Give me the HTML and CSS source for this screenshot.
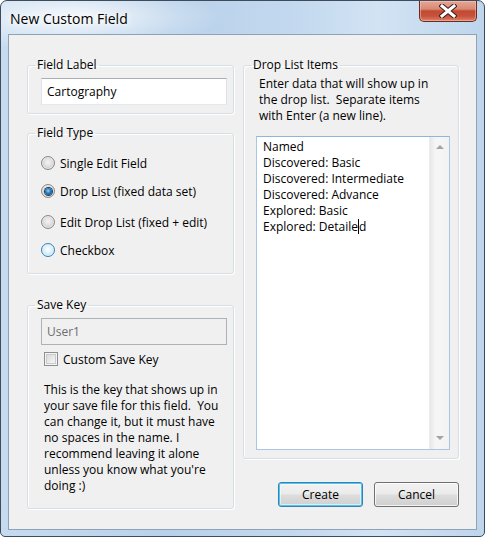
FILE: index.html
```html
<!DOCTYPE html>
<html>
<head>
<meta charset="utf-8">
<link rel="stylesheet" href="styles.css">
</head>
<body>
<div class="window">
  <div class="titlebar">
    <span class="title">New Custom Field</span>
    <div class="close">
      <svg width="18" height="14" viewBox="0 0 18 14">
        <path d="M3 2 L15 12 M15 2 L3 12" stroke="#3b1c14" stroke-width="5" stroke-linecap="square" fill="none"/>
        <path d="M3 2 L15 12 M15 2 L3 12" stroke="#ffffff" stroke-width="3" stroke-linecap="square" fill="none"/>
      </svg>
    </div>
  </div>
  <div class="client">
    <div class="col-left">
      <fieldset class="group">
        <legend>Field Label</legend>
        <div class="g-body g-label">
          <div class="textbox">Cartography</div>
        </div>
      </fieldset>
      <fieldset class="group g-type-box">
        <legend>Field Type</legend>
        <div class="g-body g-type">
          <div class="radio-row"><span class="radio"></span><span>Single Edit Field</span></div>
          <div class="radio-row r2"><span class="radio checked"></span><span>Drop List (fixed data set)</span></div>
          <div class="radio-row r3"><span class="radio"></span><span>Edit Drop List (fixed + edit)</span></div>
          <div class="radio-row r4"><span class="radio hover"></span><span>Checkbox</span></div>
        </div>
      </fieldset>
      <fieldset class="group g-save-box">
        <legend>Save Key</legend>
        <div class="g-body g-save">
          <div class="textbox disabled">User1</div>
          <div class="check-row"><span class="checkbox"></span><span>Custom Save Key</span></div>
          <p class="note">This is the key that shows up in<br>your save file for this field.&nbsp; You<br>can change it, but it must have<br>no spaces in the name. I<br>recommend leaving it alone<br>unless you know what you're<br>doing :)</p>
        </div>
      </fieldset>
    </div>
    <div class="col-right">
      <fieldset class="group">
        <legend>Drop List Items</legend>
        <div class="g-body g-items">
          <p class="desc">Enter data that will show up in<br>the drop list.&nbsp; Separate items<br>with Enter (a new line).</p>
          <div class="listbox">
            <div class="list-text">
              <div>Named</div>
              <div>Discovered: Basic</div>
              <div>Discovered: Intermediate</div>
              <div>Discovered: Advance</div>
              <div>Explored: Basic</div>
              <div>Explored: Detaile<span class="caret"></span>d</div>
            </div>
            <div class="scrollbar">
              <span class="arrow up"></span>
              <span class="arrow down"></span>
            </div>
          </div>
        </div>
      </fieldset>
      <div class="buttons">
        <div class="btn default">Create</div>
        <div class="btn">Cancel</div>
      </div>
    </div>
  </div>
</div>
</body>
</html>
```
FILE: styles.css
```css
* { box-sizing: border-box; }
html, body { margin: 0; padding: 0; }
body {
  width: 485px;
  height: 537px;
  overflow: hidden;
  background: #ffffff;
  font-family: "Open Sans", "Noto Sans", sans-serif;
  font-size: 12px;
  color: #000;
}
.window {
  width: 485px;
  height: 537px;
  border: 1px solid #3e4b5a;
  border-radius: 7px 7px 5px 5px;
  background:
    radial-gradient(ellipse 150px 34px at 70px 16px, rgba(255,255,255,0.85), rgba(255,255,255,0) 100%),
    linear-gradient(to right, #c6dbf0 0%, #b8d1ea 35%, #c2d8ee 60%, #d2e3f4 78%, #bed5ec 100%);
  display: flex;
  flex-direction: column;
  overflow: hidden;
}
.titlebar {
  height: 33px;
  display: flex;
  justify-content: space-between;
  align-items: flex-start;
  padding-left: 9px;
  flex: none;
}
.title {
  font-size: 14px;
  line-height: 20px;
  margin-top: 8px;
  color: #000;
  text-shadow: 0 0 6px #fff, 0 0 10px #fff;
}
.close {
  width: 58px;
  height: 21px;
  margin-right: 7px;
  border: 1px solid #6a2a1c;
  border-top: none;
  border-radius: 0 0 5px 5px;
  background: linear-gradient(to bottom, #e7a694 0%, #d88a75 40%, #c24a31 50%, #c7513a 75%, #dc826a 100%);
  box-shadow: inset 0 0 0 1px rgba(255,210,200,0.45);
  display: flex;
  align-items: center;
  justify-content: center;
}
.client {
  flex: 1;
  margin: 0 7px 6px 7px;
  border: 1px solid #8ea2b7;
  background: #f0f0f0;
  padding: 22px 17px 0 18px;
  display: grid;
  grid-template-columns: 207px 216px;
  column-gap: 9px;
  align-items: start;
}
.col-left, .col-right {
  display: flex;
  flex-direction: column;
}
.group {
  margin: 0;
  padding: 0;
  min-width: 0;
  border: 1px solid #d5dfe5;
  border-radius: 3px;
  box-shadow: inset 1px 1px 0 #fff, 1px 1px 0 #fff;
}
.group legend {
  margin-left: 7px;
  padding: 0 2px;
  line-height: 16px;
  font-size: 12px;
}
.g-type-box { margin-top: 11px; }
.g-save-box { margin-top: 23px; }
.g-label { padding: 5px 6px 8px 13px; }
.textbox {
  height: 27px;
  border: 1px solid #abadb3;
  border-color: #abadb3 #dbdfe6 #e3e9ef #e2e3ea;
  background: #fff;
  padding-left: 5px;
  line-height: 25px;
}
.textbox.disabled {
  background: #f0f0f0;
  border-color: #adb2b5;
  color: #6d6d6d;
}
.g-type { padding: 12px 6px 13px 13px; }
.radio-row {
  height: 20px;
  display: flex;
  align-items: center;
  gap: 5px;
}
.r2 { margin-top: 8px; }
.r3 { margin-top: 11px; }
.r4 { margin-top: 8px; }
.radio {
  width: 14px;
  height: 14px;
  border-radius: 50%;
  border: 1px solid #8a8a8a;
  background: radial-gradient(circle at 50% 45%, #f4f4f4 0%, #e2e2e2 40%, #c4c4c4 75%, #d8d8d8 100%);
  box-shadow: inset 0 0 0 1px rgba(255,255,255,0.55);
  position: relative;
  flex: none;
}
.radio.checked::after {
  content: "";
  position: absolute;
  left: 2.5px;
  top: 2.5px;
  width: 7px;
  height: 7px;
  border-radius: 50%;
  background: radial-gradient(circle at 45% 40%, #9fd6f6 0%, #2c80c2 40%, #0b3b66 100%);
  box-shadow: 0 0 0 1px #1b3f5e;
}
.radio.hover {
  border-color: #3c7fb1;
  background: radial-gradient(circle at 50% 45%, #ffffff 0%, #e4f5fd 35%, #a9daf6 85%, #c4e6f9 100%);
}
.g-save { padding: 5px 6px 14px 13px; }
.check-row {
  margin-top: 6px;
  height: 16px;
  display: flex;
  align-items: center;
  gap: 5px;
  padding-left: 3px;
}
.checkbox {
  width: 14px;
  height: 14px;
  border: 1px solid #8e8f8f;
  background: linear-gradient(135deg, #d4d4d4 0%, #ececec 60%, #fafafa 100%);
  box-shadow: inset 0 0 0 1px #f4f4f4, inset 0 0 0 2px #cbcbcb;
  flex: none;
}
.note {
  margin: 15px 0 0 0;
  padding-left: 3px;
  line-height: 16px;
  white-space: nowrap;
}
.g-items { padding: 3px 8px 8px 12px; }
.desc {
  margin: 0;
  padding-left: 3px;
  line-height: 16px;
  white-space: nowrap;
}
.listbox {
  margin-top: 12px;
  height: 314px;
  width: 194px;
  border: 1px solid #a9c7e5;
  border-top-color: #8fb5dc;
  background: #fff;
  display: flex;
}
.list-text {
  flex: 1;
  padding: 2px 0 0 6px;
  line-height: 16px;
  white-space: nowrap;
}
.caret {
  display: inline-block;
  width: 1px;
  height: 15px;
  background: #000;
  vertical-align: -3px;
}
.scrollbar {
  width: 20px;
  flex: none;
  background: linear-gradient(to right, #e8e8e8 0%, #f6f6f6 30%, #f2f2f2 100%);
  border-left: 1px solid #ececec;
  display: flex;
  flex-direction: column;
  justify-content: space-between;
  align-items: center;
  padding: 8px 0 9px 0;
}
.arrow {
  width: 0;
  height: 0;
  border-left: 4px solid transparent;
  border-right: 4px solid transparent;
}
.arrow.up { border-bottom: 4px solid #a3a3a3; }
.arrow.down { border-top: 4px solid #a3a3a3; }
.buttons {
  margin-top: 23px;
  display: flex;
  justify-content: flex-end;
  gap: 11px;
}
.btn {
  width: 85px;
  height: 25px;
  border: 1px solid #707070;
  border-radius: 3px;
  background: linear-gradient(to bottom, #f2f2f2 0%, #ebebeb 48%, #dddddd 52%, #cfcfcf 100%);
  box-shadow: inset 0 0 0 1px rgba(255,255,255,0.75);
  display: flex;
  align-items: center;
  justify-content: center;
  line-height: 16px;
}
.btn.default {
  border-color: #3c7fb1;
  box-shadow: inset 0 0 0 1px #48c8f5, inset 0 0 0 2px rgba(255,255,255,0.5);
}
```
